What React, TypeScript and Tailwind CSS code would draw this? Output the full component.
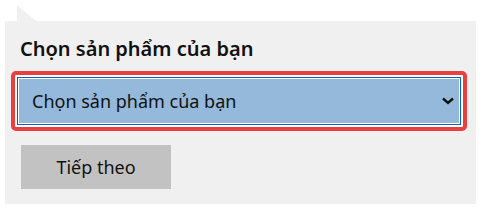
import React from "react";

export default function App() {
  return (
    <div className="w-[484px] h-[213px] bg-white pl-[5px] pt-[5px]" style={{ fontFamily: '"Noto Sans", "Open Sans", sans-serif' }}>
      <svg width="19" height="16" className="ml-[12px] block" viewBox="0 0 19 16">
        <polygon points="0,0 0,16 19,16" fill="#f0f0f0" />
      </svg>
      <div className="w-[471px] h-[183px] bg-[#f0f0f0] pl-[6px] pt-[14px] flex flex-col">
        <div className="ml-[9px] text-[20px] leading-[28px] font-semibold text-[#111]">Chọn sản phẩm của bạn</div>
        <div className="mt-[8px] w-[456px] h-[60px] rounded-[5px] border-4 border-[#e9403f] bg-white p-[2px]">
          <div className="h-full border border-[#0a64b4] bg-white p-px">
            <div className="h-full bg-[#94b9db] flex items-center justify-between pl-[13px] pr-[5px]">
              <span className="text-[18px] text-[#111]">Chọn sản phẩm của bạn</span>
              <svg width="12" height="8" viewBox="0 0 12 8" className="block">
                <polyline points="1,1.5 6,6 11,1.5" fill="none" stroke="#111" strokeWidth="2.4" />
              </svg>
            </div>
          </div>
        </div>
        <div className="mt-[14px] ml-[10px] w-[150px] h-[44px] bg-[#c2c2c2] flex items-center justify-center text-[18px] text-[#111]">
          Tiếp theo
        </div>
      </div>
    </div>
  );
}
